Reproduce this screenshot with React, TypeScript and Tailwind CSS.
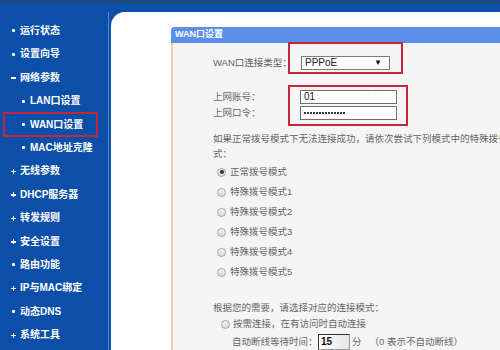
import React from "react";

const FONT = { fontFamily: '"Liberation Sans", "Noto Sans CJK SC", sans-serif' };

type Item = { label: string; mark: "dot" | "plus" | "minus"; sub?: boolean };

const items: Item[] = [
  { label: "运行状态", mark: "dot" },
  { label: "设置向导", mark: "dot" },
  { label: "网络参数", mark: "minus" },
  { label: "LAN口设置", mark: "dot", sub: true },
  { label: "WAN口设置", mark: "dot", sub: true },
  { label: "MAC地址克隆", mark: "dot", sub: true },
  { label: "无线参数", mark: "plus" },
  { label: "DHCP服务器", mark: "plus" },
  { label: "转发规则", mark: "plus" },
  { label: "安全设置", mark: "plus" },
  { label: "路由功能", mark: "dot" },
  { label: "IP与MAC绑定", mark: "plus" },
  { label: "动态DNS", mark: "dot" },
  { label: "系统工具", mark: "plus" },
];

function Mark({ m }: { m: Item["mark"] }) {
  if (m === "dot") return <span className="block w-[3px] h-[3px] bg-white rounded-[1px]" />;
  if (m === "minus") return <span className="block w-[5px] h-[2px] bg-white" />;
  return (
    <span className="relative block w-[5px] h-[5px]">
      <span className="absolute left-0 top-[2px] w-[5px] h-[1.5px] bg-white" />
      <span className="absolute top-0 left-[2px] w-[1.5px] h-[5px] bg-white" />
    </span>
  );
}

function Radio({ checked }: { checked?: boolean }) {
  return (
    <span className="flex items-center justify-center w-[9px] h-[9px] rounded-full border border-[#a3a3a3] bg-gradient-to-b from-[#f2f2f2] to-[#d9d9d9] shrink-0">
      {checked && <span className="block w-[4px] h-[4px] rounded-full bg-[#2b2b2b]" />}
    </span>
  );
}

export default function App() {
  const modes = ["正常拨号模式", "特殊拨号模式1", "特殊拨号模式2", "特殊拨号模式3", "特殊拨号模式4", "特殊拨号模式5"];
  return (
    <div className="w-[500px] h-[350px] overflow-hidden flex flex-col bg-[#0b4fa8]" style={FONT}>
      <div className="h-[4px] bg-[#1c4a84] shrink-0" />
      <div className="flex flex-1 min-h-0">
        {/* Sidebar */}
        <div className="relative w-[108px] shrink-0 pt-[15.3px] flex flex-col">
          {items.map((it) => (
            <div key={it.label} className={`h-[23.4px] flex items-center text-white font-bold text-[10px] ${it.sub ? "pl-[20px]" : "pl-[10px]"}`}>
              <span className="flex items-center justify-center w-[6px] mr-[4px]">
                <Mark m={it.mark} />
              </span>
              <span className="leading-none whitespace-nowrap">{it.label}</span>
            </div>
          ))}
          <div className="absolute left-[3px] top-[108px] w-[95px] h-[25px] border-[2.5px] border-[#c4263a]" />
        </div>
        <div className="w-[1px] mt-[8px] bg-[#5686cc] shrink-0" />
        <div className="w-[2px] shrink-0" />
        {/* Main */}
        <div className="flex-1 min-w-0 mt-[8px] bg-white rounded-tl-[14px] pl-[60px] pt-[15px] overflow-hidden">
          <div className="w-[400px] h-full flex flex-col">
            <div className="h-[16px] bg-[#5b8fe9] rounded-tl-[4px] flex items-center pl-[4px] text-white text-[9px] font-bold shrink-0">
              WAN口设置
            </div>
            <div className="flex-1 bg-[#f5f5f5] border-l-2 border-[#e2d3a9] pl-[40px] text-[9.5px] text-[#676767] relative">
              {/* Row 1 */}
              <div className="mt-[13px] h-[14px] flex items-center">
                <span className="w-[88px] text-[#5d5d5d]">WAN口连接类型：</span>
                <div className="w-[89px] h-[14px] border border-[#7b7b7b] bg-white flex items-center justify-between pl-[3px] pr-[7px]">
                  <span className="text-[10px] text-[#222] leading-none" style={{ fontFamily: '"Liberation Sans", Arial, sans-serif' }}>PPPoE</span>
                  <span className="text-[8px] text-[#111] leading-none">▼</span>
                </div>
              </div>
              {/* Row 2 */}
              <div className="mt-[20px] flex flex-col gap-[2px]">
                <div className="h-[14px] flex items-center">
                  <span className="w-[87px]">上网账号：</span>
                  <div className="w-[97px] h-[14px] border border-[#6f6f6f] bg-white flex items-center pl-[3px]">
                    <span className="text-[10px] text-[#222] leading-none" style={{ fontFamily: '"Liberation Sans", Arial, sans-serif' }}>01</span>
                    <span className="text-[8px] text-[#c9c9c9] leading-none ml-[1px]">:.</span>
                    <span className="text-[8px] text-[#d6d6d6] leading-none ml-[40px] tracking-[2px]">ˉˉ ˉ</span>
                  </div>
                </div>
                <div className="h-[14px] flex items-center">
                  <span className="w-[87px]">上网口令：</span>
                  <div className="w-[97px] h-[14px] border border-[#6f6f6f] bg-white flex items-center pl-[3px]">
                    <span className="flex gap-[1px]">
                      {Array.from({ length: 14 }).map((_, i) => (
                        <span key={i} className="block w-[2px] h-[2px] bg-[#333]" />
                      ))}
                    </span>
                  </div>
                </div>
              </div>
              {/* Paragraph */}
              <div className="mt-[11px] leading-[15px]">
                <div className="whitespace-nowrap">如果正常拨号模式下无法连接成功，请依次尝试下列模式中的特殊拨号模</div>
                <div>式：</div>
              </div>
              {/* Radios */}
              <div className="mt-[1px] flex flex-col pl-[4px]">
                {modes.map((m, i) => (
                  <div key={m} className="h-[20px] flex items-center gap-[4px]">
                    <Radio checked={i === 0} />
                    <span>{m}</span>
                  </div>
                ))}
              </div>
              <div className="mt-[18px] leading-[15px]">根据您的需要，请选择对应的连接模式：</div>
              <div className="h-[18px] flex items-center pl-[8px] gap-[2px]">
                <Radio />
                <span className="ml-[1px]">按需连接，在有访问时自动连接</span>
              </div>
              <div className="mt-[1px] h-[16px] flex items-center pl-[19px]">
                <span className="w-[86px]">自动断线等待时间：</span>
                <div className="w-[32px] h-[16px] border border-[#333] border-r-[#9a9a9a] border-b-[#9a9a9a] bg-gradient-to-r from-white to-[#e6e6e6] flex items-center pl-[2px]">
                  <span className="text-[10px] font-bold text-[#111] leading-none" style={{ fontFamily: '"Liberation Sans", Arial, sans-serif' }}>15</span>
                </div>
                <span className="ml-[2px]">分</span>
                <span className="ml-[8px]">（0 表示不自动断线）</span>
              </div>
              {/* Annotation boxes */}
              <div className="absolute left-[115px] top-[-1px] w-[115px] h-[32px] border-[2.5px] border-[#c4263a]" />
              <div className="absolute left-[115px] top-[42px] w-[120px] h-[41px] border-[2.5px] border-[#c4263a]" />
            </div>
          </div>
        </div>
      </div>
    </div>
  );
}
